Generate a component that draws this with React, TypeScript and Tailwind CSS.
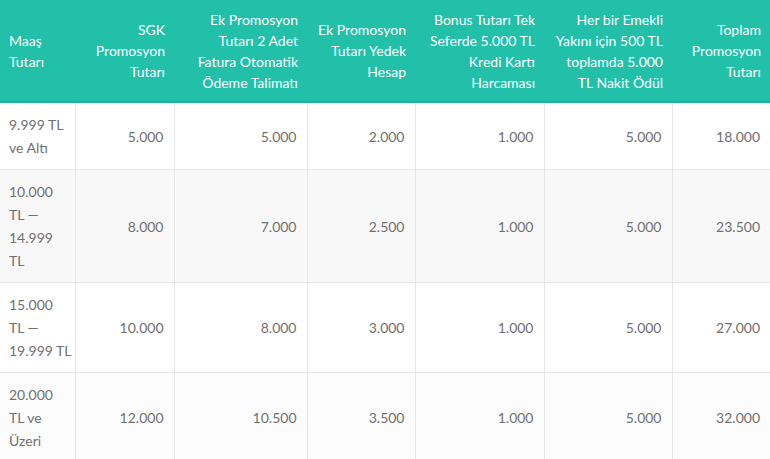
const headers: string[][] = [
  ['Maaş', 'Tutarı'],
  ['SGK', 'Promosyon', 'Tutarı'],
  ['Ek Promosyon', 'Tutarı 2 Adet', 'Fatura Otomatik', 'Ödeme Talimatı'],
  ['Ek Promosyon', 'Tutarı Yedek', 'Hesap'],
  ['Bonus Tutarı Tek', 'Seferde 5.000 TL', 'Kredi Kartı', 'Harcaması'],
  ['Her bir Emekli', 'Yakını için 500 TL', 'toplamda 5.000', 'TL Nakit Ödül'],
  ['Toplam', 'Promosyon', 'Tutarı'],
]

const widths = ['w-[75px]', 'w-[99px]', 'w-[133px]', 'w-[108px]', 'w-[129px]', 'w-[128px]', 'w-[98px]']

const rows: { label: string[]; values: string[]; bg: string }[] = [
  { label: ['9.999 TL', 've Altı'], values: ['5.000', '5.000', '2.000', '1.000', '5.000', '18.000'], bg: 'bg-white' },
  { label: ['10.000', 'TL —', '14.999', 'TL'], values: ['8.000', '7.000', '2.500', '1.000', '5.000', '23.500'], bg: 'bg-[#f8f8f8]' },
  { label: ['15.000', 'TL —', '19.999 TL'], values: ['10.000', '8.000', '3.000', '1.000', '5.000', '27.000'], bg: 'bg-white' },
  { label: ['20.000', 'TL ve', 'Üzeri'], values: ['12.000', '10.500', '3.500', '1.000', '5.000', '32.000'], bg: 'bg-[#fcfcfc]' },
]

function Lines({ lines }: { lines: string[] }) {
  return (
    <>
      {lines.map((l, i) => (
        <span key={i} className="block whitespace-nowrap">
          {l}
        </span>
      ))}
    </>
  )
}

export default function App() {
  return (
    <div className="w-[770px] h-[459px] overflow-hidden bg-white font-['Lato','Noto_Sans',sans-serif]">
      <table className="table-fixed border-collapse w-[770px]">
        <colgroup>
          {widths.map((w, i) => (
            <col key={i} className={w} />
          ))}
        </colgroup>
        <thead>
          <tr className="bg-[#22bfa9] h-[102px] border-b-2 border-[#1db3a0]">
            {headers.map((h, i) => (
              <th
                key={i}
                className={`px-[9px] py-2 align-middle font-normal text-white text-[14px] leading-[21px] ${
                  i === 0 ? 'text-left' : 'text-right'
                }`}
              >
                <Lines lines={h} />
              </th>
            ))}
          </tr>
        </thead>
        <tbody>
          {rows.map((r, ri) => (
            <tr key={ri} className={`${r.bg} border-b border-[#e6e6e6]`}>
              <td className="px-[9px] py-[10px] align-middle text-left text-[14px] leading-[23px] text-[#707070] border-r border-[#e6e6e6]">
                <Lines lines={r.label} />
              </td>
              {r.values.map((v, vi) => (
                <td
                  key={vi}
                  className={`px-[10px] py-[10px] align-middle text-right text-[14px] leading-[23px] text-[#707070] ${
                    vi < r.values.length - 1 ? 'border-r border-[#e6e6e6]' : ''
                  }`}
                >
                  {v}
                </td>
              ))}
            </tr>
          ))}
        </tbody>
      </table>
    </div>
  )
}
